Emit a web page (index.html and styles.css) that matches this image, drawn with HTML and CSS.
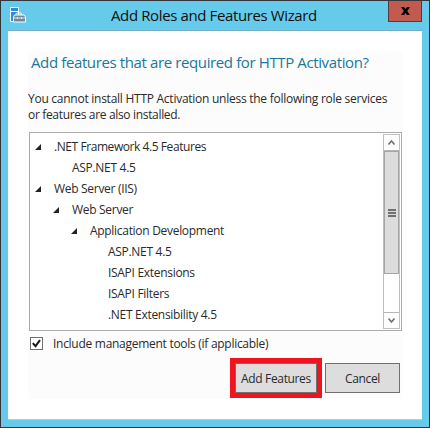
FILE: index.html
```html
<!DOCTYPE html>
<html lang="en">
<head>
    <meta charset="UTF-8">
    <title>Add Roles and Features Wizard</title>
    <link rel="stylesheet" href="styles.css">
</head>
<body>

    <div class="window">
        <div class="titlebar">
            <svg class="app-icon" width="17" height="17" viewBox="0 0 17 17">
                <path d="M1.500 1.500h8v14h-8z" fill="#2a8dd8" stroke="#fff"/>
                <path d="M2 5.500h7" stroke="#fff"/>
                <path d="M7 9V8q0-1 1-1h3.500q1 0 1 1v1" fill="none" stroke="#fff"/>
                <path d="M5.500 9h9.500l1.500 2v5h-12v-5z" fill="#71889b" stroke="#fff"/>
                <path d="M5 12h11M8.500 11v2m4-2v2" stroke="#dce8f0"/>
            </svg>
            <h1>Add Roles and Features Wizard</h1>
            <button class="close">
                <svg width="9" height="8" viewBox="0 0 9 8"><path d="M0 0h3l1.500 2L6 0h3L6.200 4 9 8H6L4.500 6 3 8H0l2.800-4z" fill="#000"/></svg>
            </button>
        </div>

        <div class="client">
            <div class="panel">
                <h2>Add features that are required for HTTP Activation?</h2>
                <p class="line-one">You cannot install HTTP Activation unless the following role services</p>
                <p class="line-two">or features are also installed.</p>

                <div class="listbox">
                    <ul class="tree">
                        <li class="open framework">.NET Framework 4.5 Features</li>
                        <li class="level1">ASP.NET 4.5</li>
                        <li class="open">Web Server (IIS)</li>
                        <li class="open level1">Web Server</li>
                        <li class="open level2">Application Development</li>
                        <li class="level3">ASP.NET 4.5</li>
                        <li class="level3">ISAPI Extensions</li>
                        <li class="level3">ISAPI Filters</li>
                        <li class="level3">.NET Extensibility 4.5</li>
                    </ul>
                    <div class="scrollbar">
                        <div class="arrow"><svg width="9" height="7" viewBox="0 0 9 7"><path d="M1.500 5.500l3-3.500 3 3.500" fill="none" stroke="#707070" stroke-width="1.600"/></svg></div>
                        <div class="thumb"><i></i><i></i><i></i></div>
                        <div class="arrow down"><svg width="9" height="7" viewBox="0 0 9 7"><path d="M1.500 1.500l3 3.500 3-3.500" fill="none" stroke="#707070" stroke-width="1.600"/></svg></div>
                    </div>
                </div>

                <div class="option">
                    <span class="checkbox"><svg width="11" height="11" viewBox="0 0 11 11"><path d="M1.800 5.200l2.700 3 4.500-6" fill="none" stroke="#1a1a1a" stroke-width="2"/></svg></span>
                    <span class="option-text">Include management tools (if applicable)</span>
                </div>

                <div class="buttons">
                    <div class="highlight"><button class="add">Add Features</button></div>
                    <button class="cancel">Cancel</button>
                </div>
            </div>
        </div>
    </div>

</body>
</html>
```
FILE: styles.css
```css
* {
    box-sizing: border-box;
}

body {
    margin: 0;
    font-family: "Open Sans", "Noto Sans", sans-serif;
    font-size: 12px;
    color: #2a2a2a;
}

h1, h2, p, ul {
    margin: 0;
    padding: 0;
    font-weight: normal;
    white-space: nowrap;
}

.window {
    width: 430px;
    height: 428px;
    background: #66caea;
    border: 1px solid #33363b;
    padding: 0 7px;
}

.titlebar {
    display: flex;
    height: 29px;
    align-items: flex-start;
}

.app-icon {
    flex: none;
    margin: 5px 0 0 1px;
}

h1 {
    width: 263px;
    margin-left: 85px;
    font-size: 15px;
    line-height: 29px;
    letter-spacing: -0.38px;
    color: #101010;
}

.close {
    display: flex;
    align-items: center;
    justify-content: center;
    flex: none;
    width: 34px;
    height: 21px;
    margin-left: 16px;
    padding: 0;
    border: 1px solid #5e373c;
    border-top: 0;
    background: #c35a50;
}

.client {
    height: 390px;
    background: #fff;
    border-top: 1px solid #76abc0;
    border-bottom: 1px solid #b5cbd6;
    padding: 20px;
}

.panel {
    width: 374px;
    height: 348px;
    background: #fcfcfc;
}

h2 {
    padding: 0 0 0 3px;
    font-size: 15px;
    line-height: 22px;
    letter-spacing: -0.38px;
    color: #17789c;
}

p {
    line-height: 16px;
}

.line-one {
    margin-top: 18px;
    letter-spacing: -0.26px;
}

.line-two {
    letter-spacing: -0.33px;
}

.listbox {
    display: flex;
    justify-content: space-between;
    width: 373px;
    height: 199px;
    margin: 9px 0 0 1px;
    border: 1px solid #acacac;
    background: #fff;
    padding: 1px;
}

.tree {
    list-style: none;
    padding: 2px 0 0 23px;
}

.tree li {
    position: relative;
    height: 21px;
    line-height: 21px;
    letter-spacing: -0.3px;
}

.tree .framework {
    letter-spacing: -0.43px;
}

.tree .level1 {
    margin-left: 18px;
}

.tree .level2 {
    margin-left: 36px;
}

.tree .level3 {
    margin-left: 54px;
}

/* expanded node marker */
.open::before {
    content: "";
    position: absolute;
    left: -19px;
    top: 8px;
    width: 6px;
    height: 6px;
    background: #222;
    clip-path: polygon(100% 0, 100% 100%, 0 100%);
}

.scrollbar {
    display: flex;
    flex-direction: column;
    width: 17px;
    height: 195px;
    border: 1px solid #c0c0c0;
}

.arrow {
    display: flex;
    align-items: center;
    justify-content: center;
    height: 16px;
    border-bottom: 1px solid #b5b5b5;
}

.arrow.down {
    margin-top: auto;
    border-top: 1px solid #b5b5b5;
    border-bottom: 0;
}

.thumb {
    display: flex;
    flex-direction: column;
    align-items: center;
    justify-content: center;
    gap: 1px;
    height: 123px;
    border: 1px solid #a5a5a5;
    background: #dcdcdc;
}

.thumb i {
    width: 8px;
    height: 2px;
    background: #707070;
}

.option {
    display: flex;
    height: 13px;
    margin: 6px 0 0 2px;
    align-items: center;
}

.checkbox {
    width: 13px;
    height: 13px;
    border: 1px solid #707070;
    background: #fff;
}

.checkbox svg {
    display: block;
}

.option-text {
    margin-left: 10px;
    letter-spacing: -0.28px;
}

.buttons {
    display: flex;
    justify-content: flex-end;
    align-items: center;
    gap: 3px;
    margin: 8px 2px 0 0;
}

.highlight {
    flex: none;
    width: 92px;
    height: 40px;
    border: 5px solid #ed1620;
}

.buttons button {
    height: 30px;
    padding: 0;
    border: 1px solid #707070;
    background: #dddddd;
    color: #2a2a2a;
    font: inherit;
    letter-spacing: -0.35px;
    white-space: nowrap;
}

.add {
    width: 82px;
}

.cancel {
    width: 75px;
}
```
